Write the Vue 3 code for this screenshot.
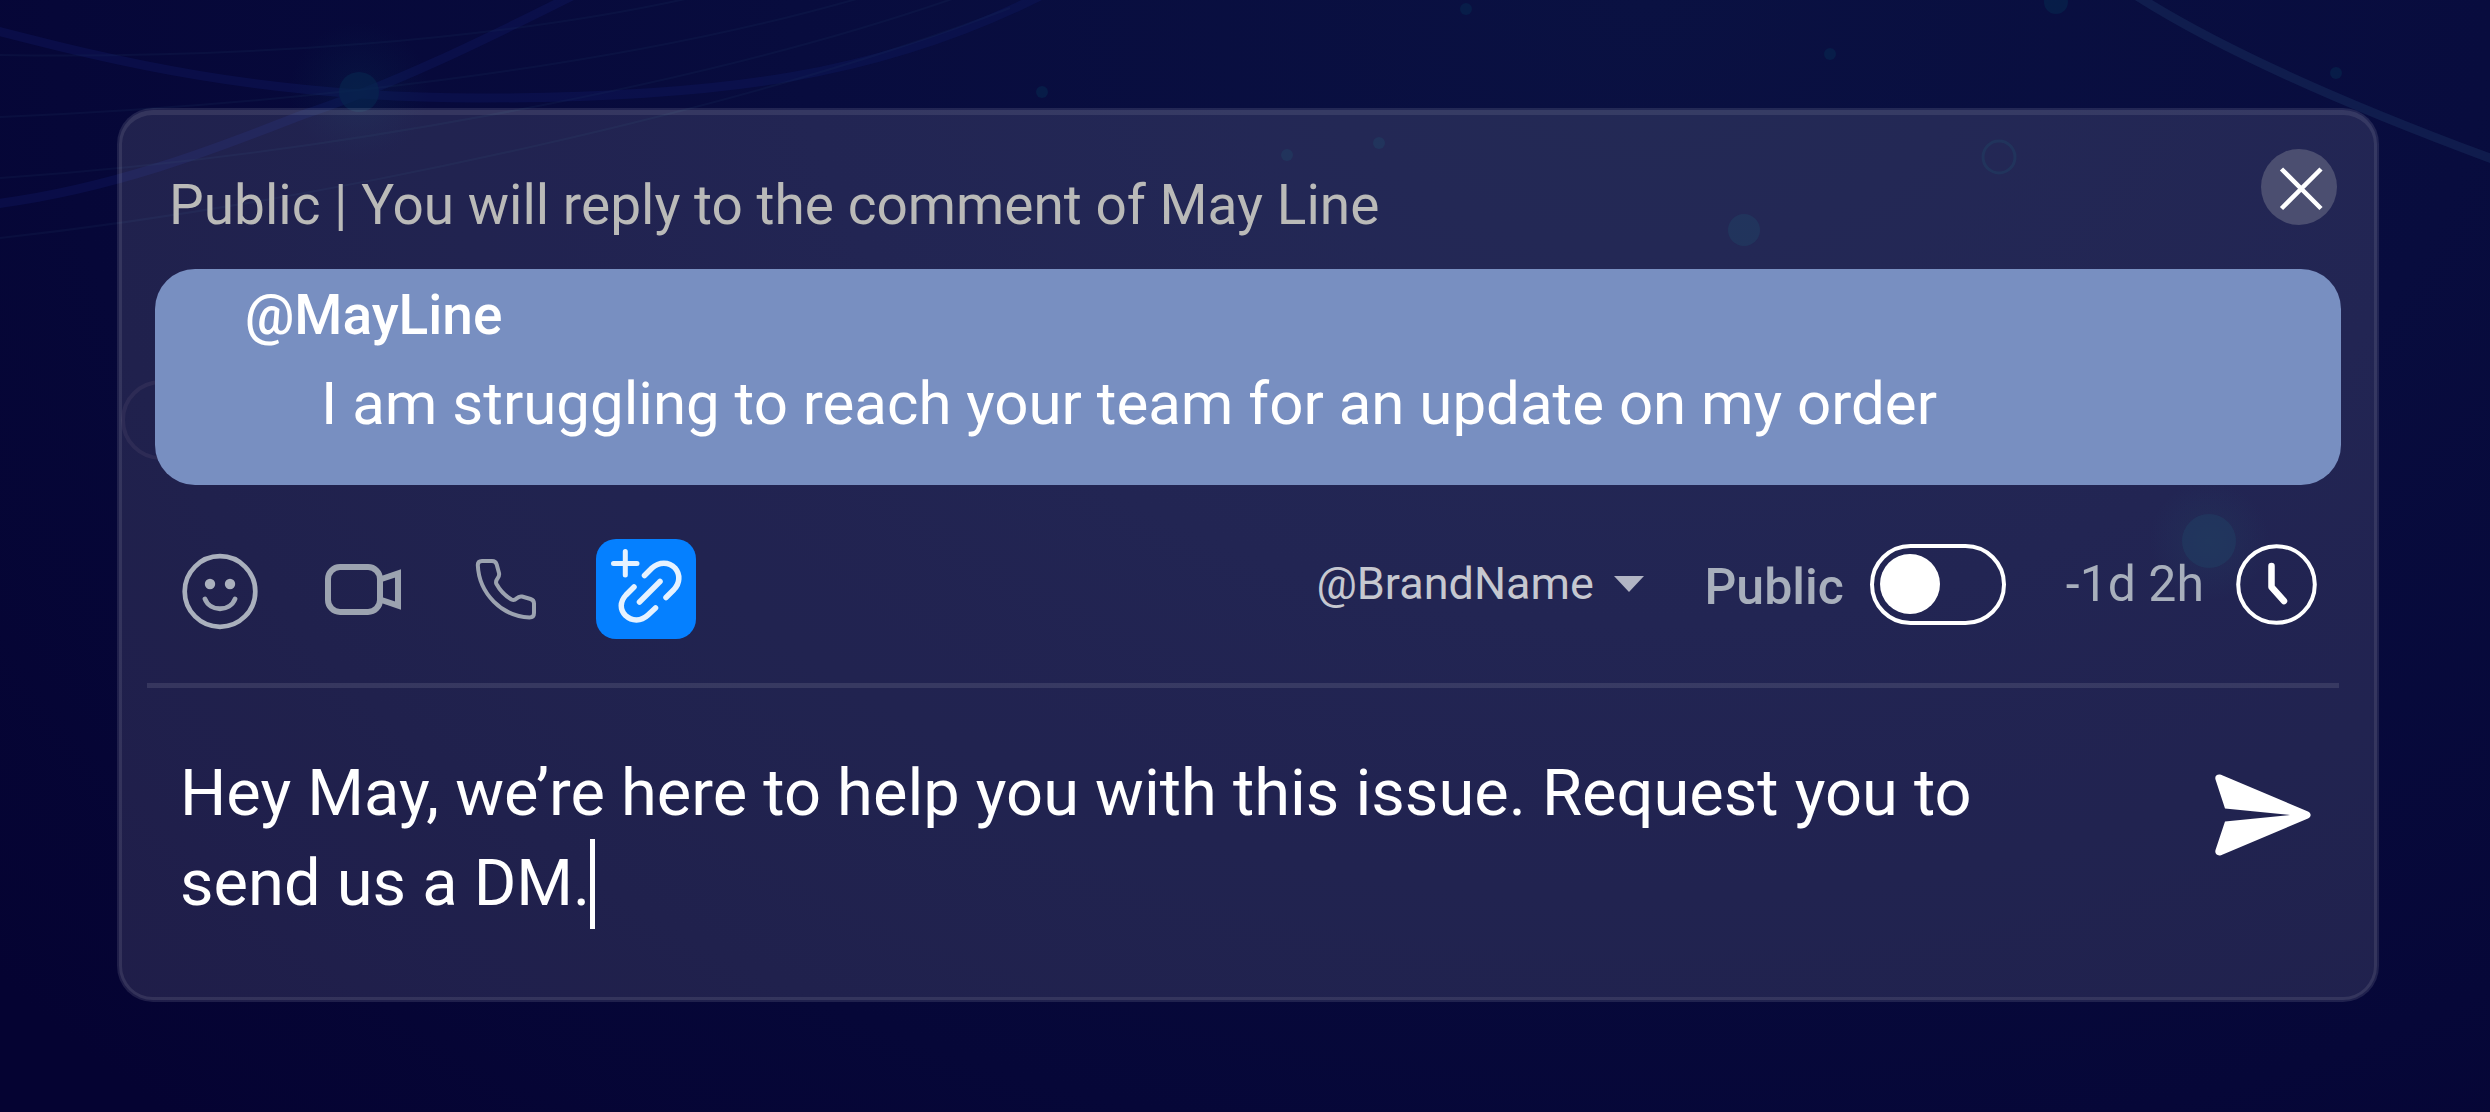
<template>
  <main class="page">
    <!-- Decorative network lines -->
    <svg class="backdrop" viewBox="0 0 2490 1112" preserveAspectRatio="xMidYMid slice" aria-hidden="true">
      <defs>
        <radialGradient id="nodeGlow">
          <stop offset="0%" stop-color="#0b3a5c" stop-opacity="0.2" />
          <stop offset="100%" stop-color="#0b3a5c" stop-opacity="0" />
        </radialGradient>
      </defs>
      <g fill="none" stroke="#101860" stroke-width="9" opacity="0.4">
        <path d="M-10 29C110 60 260 98 480 98C720 98 880 76 1040 -4" />
        <path d="M572 -4C480 42 390 86 302 115C230 143 120 188 -5 204" />
      </g>
      <path d="M2137 -4C2200 36 2300 88 2495 160" fill="none" stroke="#1a3060" stroke-width="9" opacity="0.45" />
      <g fill="none" stroke="#1c3560" stroke-width="2" opacity="0.18">
        <path d="M0 55C240 59 500 40 690 -2" />
        <path d="M0 117C280 105 610 70 860 -2" />
        <path d="M0 178C300 158 690 90 955 -2" />
        <path d="M0 238C340 200 760 105 1010 8" />
      </g>
      <circle cx="359" cy="92" r="70" fill="url(#nodeGlow)" />
      <circle cx="2209" cy="541" r="60" fill="url(#nodeGlow)" />
      <circle v-for="(dot, i) in dots" :key="i" :cx="dot[0]" :cy="dot[1]" :r="dot[2]" fill="#07264f" opacity="0.6" />
      <circle cx="1999" cy="157" r="16" fill="none" stroke="#07264f" stroke-width="3" opacity="0.6" />
      <circle cx="161" cy="420" r="38" fill="none" stroke="#151340" stroke-width="4" />
    </svg>

    <section class="card">
      <header class="card-header">
        <h1 class="title">Public | You will reply to the comment of May Line</h1>
        <button class="close" type="button" aria-label="Close">
          <svg viewBox="0 0 76 76">
            <path d="M20.500 20L60 59.500M60 20L20.500 59.500" fill="none" stroke="#fff" stroke-width="4.500" />
          </svg>
        </button>
      </header>

      <blockquote class="quote">
        <p class="quote-author">@MayLine</p>
        <p class="quote-text">I am struggling to reach your team for an update on my order</p>
      </blockquote>

      <div class="toolbar">
        <div class="tools">
          <button class="tool" type="button" aria-label="Emoji">
            <svg viewBox="0 0 76 76">
              <circle cx="38" cy="40.500" r="35.300" fill="none" stroke="#aab0bd" stroke-width="4.700" />
              <circle cx="28" cy="33" r="5.200" fill="#aab0bd" />
              <circle cx="48" cy="33" r="5.200" fill="#aab0bd" />
              <path d="M23 48C28 61 48 61 53 48" fill="none" stroke="#a1a8b5" stroke-width="4.800" stroke-linecap="round" />
            </svg>
          </button>
          <button class="tool" type="button" aria-label="Video">
            <svg viewBox="0 0 76 76" fill="none" stroke="#9ca3b0" stroke-width="6">
              <rect x="3" y="16" width="52" height="45" rx="12" />
              <path d="M55 28.500L73 22.500V54.500L55 48.500" />
            </svg>
          </button>
          <button class="tool" type="button" aria-label="Call">
            <svg viewBox="0 0 76 76" fill="none" stroke="#9ca3b0" stroke-width="4" stroke-linejoin="round">
              <path d="M14 10H24C27 10 28 11 28.700 13.500L31 22C31.500 24 31 25.500 29.500 27.500C28 29.500 27.500 31 28.500 33C32 39.500 37.500 45 43.500 48.500C45.500 49.500 47 49 48.500 47.500C50 46 51.500 45 54 45.500L62.500 48C65 48.700 66 50 66 52.500V62C66 65 64.500 66.500 61.500 66.500C34 65.500 11 42.500 9.800 14C9.800 11.500 11 10 14 10Z" />
            </svg>
          </button>
        </div>
        <button class="link-tool" type="button" aria-label="Add link">
          <svg viewBox="0 0 100 100" fill="none" stroke="#e6f2ff" stroke-width="5.500" stroke-linecap="round">
            <path d="M17.500 24.500H41M29.300 12.500V36" stroke-width="5" />
            <path d="M48.500 36.500L56 29C63 22.500 73 22.500 79 29C84.500 35.500 84 44 78 50.500L70 58.500" />
            <path d="M38 48L30 56C23.500 63 24 71 29.500 76.500C36 82.500 45 82.500 52 76L59.500 69" />
            <path d="M43.500 63L64 42.500" />
          </svg>
        </button>

        <div class="options">
          <div class="brand">
            <select v-model="brand" class="brand-select" aria-label="Brand">
              <option>@BrandName</option>
            </select>
            <svg class="brand-arrow" viewBox="0 0 30 16" aria-hidden="true">
              <path d="M0 0H30L15 16Z" fill="#b2b5c4" />
            </svg>
          </div>
          <label class="visibility" for="visibility">Public</label>
          <input id="visibility" v-model="isPrivate" class="toggle" type="checkbox" role="switch" />
          <span class="due">-1d 2h</span>
          <button class="clock" type="button" aria-label="Schedule">
            <svg viewBox="0 0 81 81" fill="none" stroke="#fff">
              <circle cx="40.500" cy="40.500" r="38.300" stroke-width="4" />
              <path d="M35.500 22V43L48 57" stroke-width="6.500" stroke-linecap="round" stroke-linejoin="round" />
            </svg>
          </button>
        </div>
      </div>

      <hr class="divider" />

      <form class="composer" @submit.prevent>
        <div class="field">
          <textarea v-model="message" class="message" aria-label="Reply" spellcheck="false"></textarea>
          <!-- Sizes the textarea and carries the caret -->
          <div class="mirror" aria-hidden="true">{{ message }}<span class="caret"></span></div>
        </div>
        <button class="send" type="submit" aria-label="Send">
          <svg viewBox="0 0 96 82">
            <path
              d="M6 0.800L93 37.500C96.500 39 96.500 43 93 44.500L6 81.200C2 82.200 -0.500 79.500 0.500 76L10 47.500L75 41L10 34.500L0.500 5.500C-0.500 2 2 -0.200 6 0.800Z"
              fill="#fff"
            />
          </svg>
        </button>
      </form>
    </section>
  </main>
</template>

<script setup>
import { ref } from 'vue'

const brand = ref('@BrandName')
const isPrivate = ref(false)
const message = ref('Hey May, we’re here to help you with this issue. Request you to send us a DM.')

// x, y, radius
const dots = [
  [359, 92, 20],
  [1042, 92, 6],
  [1466, 9, 6],
  [2056, 2, 12],
  [1830, 54, 6],
  [2336, 73, 6],
  [1379, 143, 6],
  [1287, 155, 6],
  [1744, 230, 16],
  [2209, 541, 27],
]
</script>

<style>
body {
  margin: 0;
  background: #050434;
}
</style>

<style scoped>
.page {
  position: relative;
  box-sizing: border-box;
  min-height: 100vh;
  padding: 108px 111px 108px 117px;
  overflow: hidden;
  font-family: Roboto, "Liberation Sans", sans-serif;
  background: radial-gradient(ellipse 85% 140% at 66% 0%, #0a1142 0%, #080c3e 40%, #060738 75%, #050332 100%);
}

.backdrop {
  position: absolute;
  inset: 0;
  width: 100%;
  height: 100%;
}

button {
  padding: 0;
  border: 0;
  background: none;
  cursor: pointer;
}

button svg {
  display: block;
  width: 100%;
  height: 100%;
  overflow: visible;
}

/* Card */
.card {
  position: relative;
  padding: 41px 38px 73px;
  border-radius: 36px;
  background: rgba(245, 250, 255, 0.108);
}

.card::before {
  content: "";
  position: absolute;
  inset: 2px;
  border: 3px solid rgba(255, 255, 255, 0.09);
  border-top-width: 5px;
  border-radius: 34px;
  pointer-events: none;
}

.card-header {
  display: flex;
  justify-content: space-between;
  align-items: flex-start;
  height: 120px;
  padding: 0 4px 0 14px;
}

.title {
  margin: 24px 0 0;
  font-size: 55px;
  font-weight: 400;
  line-height: 64px;
  color: #babab8;
}

.close {
  flex: none;
  width: 76px;
  height: 76px;
  border-radius: 50%;
  background: #4b4e70;
}

/* Quoted comment */
.quote {
  margin: 0;
  padding: 14px 90px 46px;
  border-radius: 40px;
  background: #788fc1;
  color: #fff;
}

.quote-author {
  margin: 0 0 22px;
  font-size: 55px;
  font-weight: 500;
  line-height: 64px;
}

.quote-text {
  margin: 0;
  padding-left: 76px;
  font-size: 60px;
  line-height: 70px;
}

/* Toolbar */
.toolbar {
  display: flex;
  align-items: flex-start;
  padding: 54px 24px 44px 27px;
}

.tools {
  display: flex;
  align-items: center;
  gap: 67px;
  height: 100px;
  margin-right: 52px;
}

.tool {
  width: 76px;
  height: 76px;
}

.link-tool {
  width: 100px;
  height: 100px;
  border-radius: 20px;
  background: #0580ff;
}

.options {
  display: flex;
  align-items: center;
  height: 90px;
  margin-left: auto;
}

.brand {
  display: flex;
  align-items: center;
  gap: 20px;
  margin-right: 60px;
}

.brand-select {
  appearance: none;
  padding: 0;
  border: 0;
  background: none;
  font-family: inherit;
  font-size: 45px;
  line-height: 54px;
  color: #c6c8d0;
}

.brand-arrow {
  width: 30px;
  height: 16px;
}

.visibility {
  margin: 6px 26px 0 0;
  font-size: 50px;
  font-weight: 500;
  line-height: 60px;
  color: #a8afbc;
}

.toggle {
  appearance: none;
  box-sizing: border-box;
  display: flex;
  align-items: center;
  width: 136px;
  height: 81px;
  margin: 0 60px 0 0;
  padding: 0 6px;
  border: 4px solid #fff;
  border-radius: 41px;
}

.toggle::before {
  content: "";
  width: 60px;
  height: 60px;
  border-radius: 50%;
  background: #fff;
}

.toggle:checked {
  justify-content: flex-end;
}

.due {
  margin-right: 32px;
  font-size: 50px;
  line-height: 60px;
  color: #a8afbc;
}

.clock {
  width: 81px;
  height: 81px;
}

.divider {
  height: 5px;
  margin: 0 2px 0 -8px;
  border: 0;
  background: rgba(255, 255, 255, 0.1);
}

/* Composer */
.composer {
  display: flex;
  align-items: flex-start;
  gap: 150px;
  padding: 60px 30px 0 25px;
}

.field {
  display: grid;
  flex: 1;
}

.message,
.mirror {
  grid-area: 1 / 1;
  font-family: inherit;
  font-size: 65px;
  font-weight: 400;
  line-height: 90px;
  white-space: pre-wrap;
  overflow-wrap: break-word;
}

.message {
  width: 100%;
  margin: 0;
  padding: 0;
  border: 0;
  outline: none;
  overflow: hidden;
  resize: none;
  background: none;
  color: #fff;
  caret-color: transparent;
}

.mirror {
  color: transparent;
  pointer-events: none;
}

.caret {
  display: inline-block;
  width: 5px;
  height: 90px;
  vertical-align: -24px;
  background: #fff;
}

.send {
  flex: none;
  width: 96px;
  height: 82px;
  margin-top: 26px;
}
</style>
